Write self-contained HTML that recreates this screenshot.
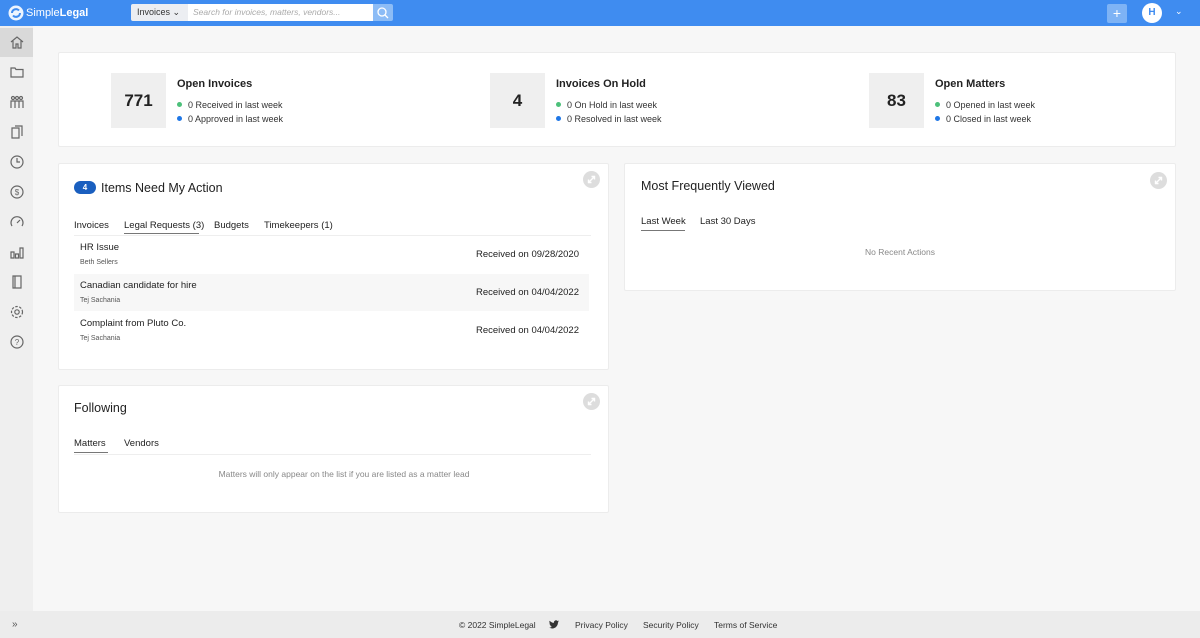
<!DOCTYPE html>
<html><head><meta charset="utf-8"><style>
*{box-sizing:border-box;margin:0;padding:0}
body{width:1200px;height:638px;overflow:hidden;font-family:"Liberation Sans",sans-serif;background:#f7f7f7;color:#222;position:relative}
.top{position:absolute;left:0;top:0;width:1200px;height:26px;background:#3f8cf0}
.side{position:absolute;left:0;top:26px;width:33px;height:612px;background:#efefef}
.side .ic{position:absolute;left:9px;width:16px;height:16px;color:#666}
.card{position:absolute;background:#fff;border:1px solid #ececec;border-radius:2px}
.abs{position:absolute}
.big{position:absolute;width:55px;height:55px;background:#efefef;font-size:17px;font-weight:bold;text-align:center;line-height:55px}
.st h4{font-size:11px;font-weight:bold;margin-bottom:10px}
.st div{font-size:9px;color:#333;margin-bottom:4px}
.dot{display:inline-block;width:5px;height:5px;border-radius:50%;margin-right:6px;vertical-align:1px}
.tabs span{position:absolute;font-size:9.5px;color:#222}
.row{position:absolute;left:15px;width:515px;height:37px;font-size:9.5px}
.row b{font-weight:normal;position:absolute;left:6px;top:6px}
.row small{position:absolute;left:6px;top:23px;font-size:7px;color:#555}
.row i{position:absolute;right:10px;top:13px;font-style:normal}
.exp{position:absolute;width:17px;height:17px;border-radius:50%;background:#ddd}
.foot{position:absolute;left:0;top:611px;width:1200px;height:27px;background:#ececec;font-size:8.5px;color:#333}
.h{font-size:12.5px;color:#222}
</style></head><body>
<div class="top">
 <svg class="abs" style="left:8px;top:5px" width="16" height="16" viewBox="0 0 16 16"><circle cx="8" cy="8" r="7.5" fill="#fff" opacity=".9"/><path d="M4 8a4 4 0 0 1 7-2.5M12 8a4 4 0 0 1-7 2.5" stroke="#3f8cf0" stroke-width="2" fill="none"/></svg>
 <div class="abs" style="left:26px;top:7px;color:#fff;font-size:11px">Simple<b>Legal</b></div>
 <div class="abs" style="left:131px;top:4px;width:57px;height:17px;background:#eceef2;border-radius:2px 0 0 2px;font-size:9px;line-height:17px;padding-left:6px;color:#333">Invoices ⌄</div>
 <div class="abs" style="left:188px;top:4px;width:185px;height:17px;background:#fff;font-size:8.5px;font-style:italic;color:#aaa;line-height:17px;padding-left:5px">Search for invoices, matters, vendors...</div>
 <div class="abs" style="left:373px;top:4px;width:20px;height:17px;background:#8cbcf6;border-radius:0 2px 2px 0"><svg width="20" height="17"><circle cx="9" cy="8" r="4" stroke="#fff" stroke-width="1.3" fill="none"/><path d="M12 11l3 3" stroke="#fff" stroke-width="1.3"/></svg></div>
 <div class="abs" style="left:1107px;top:4px;width:20px;height:19px;background:#7eb3f5;border-radius:2px;color:#fff;text-align:center;font-size:14px;line-height:18px">+</div>
 <div class="abs" style="left:1142px;top:3px;width:20px;height:20px;border-radius:50%;background:#fff;color:#3f8cf0;font-size:10px;font-weight:bold;text-align:center;line-height:20px">H</div>
 <div class="abs" style="left:1175px;top:6px;color:#fff;font-size:9px">⌄</div>
</div>
<div class="side">
 <div class="abs" style="left:0;top:2px;width:33px;height:29px;background:#d9d9d9"></div>
 <svg class="ic" style="top:8px" viewBox="0 0 16 16" fill="none" stroke="#666" stroke-width="1.2"><path d="M2 8l6-5 6 5M4 7v7h3v-4h2v4h3V7"/></svg>
 <svg class="ic" style="top:38px" viewBox="0 0 16 16" fill="none" stroke="#666" stroke-width="1.2"><path d="M2 4h4l1 1.5h7V13H2z"/></svg>
 <svg class="ic" style="top:68px" viewBox="0 0 16 16" fill="none" stroke="#666" stroke-width="1.2"><circle cx="4" cy="4" r="1.5"/><circle cx="8" cy="4" r="1.5"/><circle cx="12" cy="4" r="1.5"/><path d="M2 14V7h12v7M6 7v7M10 7v7"/></svg>
 <svg class="ic" style="top:98px" viewBox="0 0 16 16" fill="none" stroke="#666" stroke-width="1.2"><path d="M3 4h7v10H3zM6 2h7v10"/></svg>
 <svg class="ic" style="top:128px" viewBox="0 0 16 16" fill="none" stroke="#666" stroke-width="1.2"><circle cx="8" cy="8" r="6"/><path d="M8 4v4h3"/></svg>
 <svg class="ic" style="top:158px" viewBox="0 0 16 16" fill="none" stroke="#666" stroke-width="1.2"><circle cx="8" cy="8" r="6"/><text x="8" y="11" font-size="8" text-anchor="middle" fill="#666" stroke="none">$</text></svg>
 <svg class="ic" style="top:188px" viewBox="0 0 16 16" fill="none" stroke="#666" stroke-width="1.2"><path d="M3 12a6 6 0 1 1 10 0M8 9l3-3"/></svg>
 <svg class="ic" style="top:218px" viewBox="0 0 16 16" fill="none" stroke="#666" stroke-width="1.2"><path d="M2 14V8h3v6zM6.5 14V10h3v4zM11 14V4h3v10z"/></svg>
 <svg class="ic" style="top:248px" viewBox="0 0 16 16" fill="none" stroke="#666" stroke-width="1.2"><path d="M4 2h8v12H4zM6 2v12"/></svg>
 <svg class="ic" style="top:278px" viewBox="0 0 16 16" fill="none" stroke="#666" stroke-width="1.2"><circle cx="8" cy="8" r="2.2"/><circle cx="8" cy="8" r="5.5" stroke-dasharray="2.5 1.5"/></svg>
 <svg class="ic" style="top:308px" viewBox="0 0 16 16" fill="none" stroke="#666" stroke-width="1.2"><circle cx="8" cy="8" r="6"/><text x="8" y="11" font-size="8" text-anchor="middle" fill="#666" stroke="none">?</text></svg>
</div>

<div class="card" style="left:58px;top:52px;width:1118px;height:95px">
 <div class="big" style="left:52px;top:20px">771</div>
 <div class="st abs" style="left:118px;top:25px"><h4>Open Invoices</h4><div><span class="dot" style="background:#4cc07a"></span>0 Received in last week</div><div><span class="dot" style="background:#1f77e6"></span>0 Approved in last week</div></div>
 <div class="big" style="left:431px;top:20px">4</div>
 <div class="st abs" style="left:497px;top:25px"><h4>Invoices On Hold</h4><div><span class="dot" style="background:#4cc07a"></span>0 On Hold in last week</div><div><span class="dot" style="background:#1f77e6"></span>0 Resolved in last week</div></div>
 <div class="big" style="left:810px;top:20px">83</div>
 <div class="st abs" style="left:876px;top:25px"><h4>Open Matters</h4><div><span class="dot" style="background:#4cc07a"></span>0 Opened in last week</div><div><span class="dot" style="background:#1f77e6"></span>0 Closed in last week</div></div>
</div>

<svg width="0" height="0" style="position:absolute"><defs><g id="ex"><circle cx="8.5" cy="8.5" r="8.5" fill="#ddd"/><path d="M5.5 11.5l6-6M8.5 5.5h3v3M5.5 8.5v3h3" stroke="#fff" stroke-width="1.4" fill="none"/></g></defs></svg>

<div class="card" style="left:58px;top:163px;width:551px;height:207px">
 <div class="abs" style="left:15px;top:17px;width:22px;height:13px;border-radius:7px;background:#1a5fbf;color:#fff;font-size:8px;text-align:center;line-height:13px;font-weight:bold">4</div>
 <div class="abs h" style="left:42px;top:17px">Items Need My Action</div>
 <svg class="abs" style="left:524px;top:7px" width="17" height="17"><use href="#ex"/></svg>
 <div class="tabs"><span style="left:15px;top:56px">Invoices</span><span style="left:65px;top:56px">Legal Requests (3)</span><span style="left:155px;top:56px">Budgets</span><span style="left:205px;top:56px">Timekeepers (1)</span></div>
 <div class="abs" style="left:65px;top:69px;width:75px;height:1px;background:#777"></div>
 <div class="abs" style="left:15px;top:71px;width:517px;height:1px;background:#eee"></div>
 <div class="row" style="top:72px"><b>HR Issue</b><small>Beth Sellers</small><i>Received on 09/28/2020</i></div>
 <div class="row" style="top:110px;background:#f7f7f7"><b>Canadian candidate for hire</b><small>Tej Sachania</small><i>Received on 04/04/2022</i></div>
 <div class="row" style="top:148px"><b>Complaint from Pluto Co.</b><small>Tej Sachania</small><i>Received on 04/04/2022</i></div>
</div>

<div class="card" style="left:624px;top:163px;width:552px;height:128px">
 <div class="abs h" style="left:16px;top:15px">Most Frequently Viewed</div>
 <svg class="abs" style="left:525px;top:8px" width="17" height="17"><use href="#ex"/></svg>
 <div class="tabs"><span style="left:16px;top:52px">Last Week</span><span style="left:75px;top:52px">Last 30 Days</span></div>
 <div class="abs" style="left:16px;top:66px;width:44px;height:1px;background:#777"></div>
 <div class="abs" style="left:0;top:83px;width:550px;text-align:center;font-size:8.5px;color:#888">No Recent Actions</div>
</div>

<div class="card" style="left:58px;top:385px;width:551px;height:128px">
 <div class="abs h" style="left:15px;top:15px">Following</div>
 <svg class="abs" style="left:524px;top:7px" width="17" height="17"><use href="#ex"/></svg>
 <div class="tabs"><span style="left:15px;top:52px">Matters</span><span style="left:65px;top:52px">Vendors</span></div>
 <div class="abs" style="left:15px;top:66px;width:34px;height:1px;background:#777"></div>
 <div class="abs" style="left:15px;top:68px;width:517px;height:1px;background:#eee"></div>
 <div class="abs" style="left:0;top:83px;width:570px;text-align:center;font-size:8.5px;color:#888">Matters will only appear on the list if you are listed as a matter lead</div>
</div>

<div class="foot">
 <div class="abs" style="left:12px;top:8px;font-size:10px;color:#555">»</div>
 <div class="abs" style="left:459px;top:9px">© 2022 SimpleLegal</div>
 <svg class="abs" style="left:549px;top:9px" width="10" height="9" viewBox="0 0 24 20"><path d="M24 2.4a10 10 0 0 1-2.8.8A5 5 0 0 0 23.3.4a10 10 0 0 1-3.1 1.2A4.9 4.9 0 0 0 11.8 6 14 14 0 0 1 1.7.9a4.9 4.9 0 0 0 1.5 6.6A4.9 4.9 0 0 1 1 6.9a4.9 4.9 0 0 0 3.9 4.9 4.9 4.9 0 0 1-2.2.1 4.9 4.9 0 0 0 4.6 3.4A9.9 9.9 0 0 1 0 17.3 14 14 0 0 0 7.5 19.5c9.1 0 14-7.5 14-14v-.6A10 10 0 0 0 24 2.4z" fill="#333"/></svg>
 <div class="abs" style="left:575px;top:9px">Privacy Policy</div>
 <div class="abs" style="left:643px;top:9px">Security Policy</div>
 <div class="abs" style="left:714px;top:9px">Terms of Service</div>
</div>
</body></html>
